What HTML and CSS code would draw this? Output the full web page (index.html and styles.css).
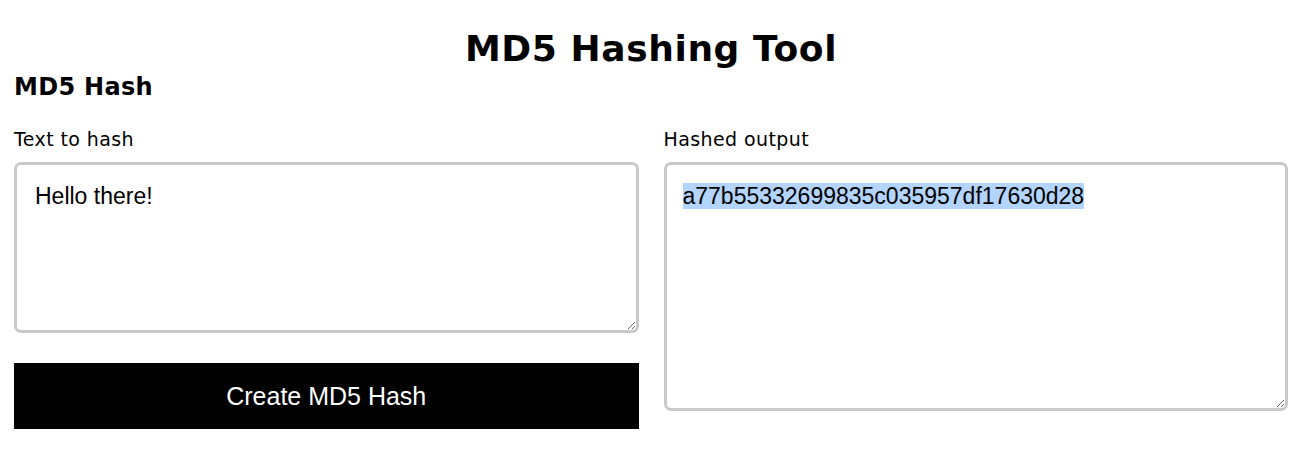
FILE: index.html
```html
<!DOCTYPE html>
<html>
<head>
<meta charset="utf-8">
<link rel="stylesheet" href="styles.css">
</head>
<body>
<h1 class="title">MD5 Hashing Tool</h1>
<h2 class="subtitle">MD5 Hash</h2>
<div class="grid">
  <div class="col">
    <label class="label" for="src">Text to hash</label>
    <textarea id="src" class="box box-in">Hello there!</textarea>
    <button class="btn">Create MD5 Hash</button>
  </div>
  <div class="col">
    <label class="label">Hashed output</label>
    <div class="box box-out"><span class="sel">a77b55332699835c035957df17630d28</span></div>
  </div>
</div>
</body>
</html>
```
FILE: styles.css
```css
html, body { margin: 0; padding: 0; background: #fff; }
body {
  padding: 0 12px 0 14px;
  font-family: "DejaVu Sans", sans-serif;
  color: #000;
}
.title {
  margin: 0;
  padding-top: 26px;
  text-align: center;
  font-size: 36px;
  letter-spacing: 0.6px;
  line-height: 46px;
  font-weight: bold;
}
.subtitle {
  margin: 0;
  font-size: 24px;
  letter-spacing: 0.3px;
  line-height: 30px;
  font-weight: bold;
}
.grid {
  display: grid;
  grid-template-columns: 1fr 1fr;
  column-gap: 25px;
  margin-top: 27px;
}
.col { display: flex; flex-direction: column; }
.label {
  font-size: 19px;
  letter-spacing: 0.4px;
  line-height: 20px;
  margin-bottom: 13px;
}
.box {
  box-sizing: border-box;
  border: 3px solid #c9c9c9;
  border-radius: 7px;
  padding: 17px 18px;
  font-family: "Liberation Sans", Arial, sans-serif;
  font-size: 23px;
  line-height: 28px;
  color: #000;
  background: #fff;
  width: 100%;
}
.box-in { height: 171px; resize: vertical; outline: none; display: block; margin: 0; }
.box-out { height: 249px; resize: both; overflow: auto; padding-left: 16px; }
.sel { background: #b3d4fc; }
.btn {
  margin-top: 30px;
  height: 66px;
  background: #000;
  color: #fff;
  border: none;
  font-family: "Liberation Sans", Arial, sans-serif;
  font-size: 25px;
  cursor: pointer;
}
```
